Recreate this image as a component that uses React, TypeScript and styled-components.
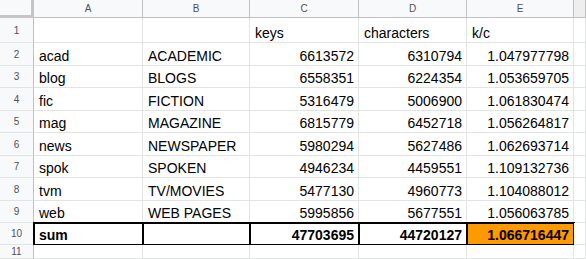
import React from 'react'
import styled, { createGlobalStyle } from 'styled-components'

const GlobalStyle = createGlobalStyle`
  html, body {
    margin: 0;
    padding: 0;
    background: #ffffff;
    overflow: hidden;
  }
`

const COLUMNS = ['A', 'B', 'C', 'D', 'E', '']
const ROW_HEIGHTS = [25, 23, 22, 23, 22, 23, 22, 23, 22, 22]

const Sheet = styled.div`
  display: grid;
  grid-template-columns: 34px 109px 107px 109px 108px 107px 1fr;
  grid-template-rows: 18px ${ROW_HEIGHTS.map((h) => `${h}px`).join(' ')} 1fr;
  width: 586px;
  height: 259px;
  font-family: 'Liberation Sans', Arial, sans-serif;
  color: #000;
`

const CornerCell = styled.div`
  box-sizing: border-box;
  background: #f8f9fa;
  border-right: 3px solid #c4c7c5;
  border-bottom: 3px solid #c4c7c5;
`

const ColHeader = styled.div<{ $spare?: boolean }>`
  box-sizing: border-box;
  display: flex;
  align-items: center;
  justify-content: center;
  background: ${({ $spare }) => ($spare ? '#eeeeee' : '#f8f9fa')};
  border-right: 1px solid #c0c0c0;
  border-bottom: 1px solid #c0c0c0;
  font-size: 10px;
  color: #4d5156;
`

const RowHeader = styled.div`
  box-sizing: border-box;
  display: flex;
  align-items: center;
  justify-content: center;
  background: #f8f9fa;
  border-right: 1px solid #c0c0c0;
  border-bottom: 1px solid #e2e3e3;
  font-size: 10px;
  color: #4d5156;
`

const Cell = styled.div<{ $align?: 'left' | 'right'; $sum?: boolean; $fill?: string }>`
  box-sizing: border-box;
  display: flex;
  align-items: flex-end;
  justify-content: ${({ $align }) => ($align === 'right' ? 'flex-end' : 'flex-start')};
  padding: 0 4px 1px 5px;
  background: ${({ $fill }) => $fill || '#ffffff'};
  border-right: 1px solid #e2e3e3;
  border-bottom: 1px solid #e2e3e3;
  font-size: 14px;
  line-height: 16px;
  font-weight: ${({ $sum }) => ($sum ? 700 : 400)};
  white-space: nowrap;
  overflow: hidden;
  ${({ $sum }) => ($sum ? 'outline: 2px solid #000; outline-offset: -1px;' : '')}
`

type Row = [string, string, string, string, string]

const rows: Row[] = [
  ['', '', 'keys', 'characters', 'k/c'],
  ['acad', 'ACADEMIC', '6613572', '6310794', '1.047977798'],
  ['blog', 'BLOGS', '6558351', '6224354', '1.053659705'],
  ['fic', 'FICTION', '5316479', '5006900', '1.061830474'],
  ['mag', 'MAGAZINE', '6815779', '6452718', '1.056264817'],
  ['news', 'NEWSPAPER', '5980294', '5627486', '1.062693714'],
  ['spok', 'SPOKEN', '4946234', '4459551', '1.109132736'],
  ['tvm', 'TV/MOVIES', '5477130', '4960773', '1.104088012'],
  ['web', 'WEB PAGES', '5995856', '5677551', '1.056063785'],
  ['sum', '', '47703695', '44720127', '1.066716447'],
]

const isNumber = (v: string) => /^[0-9.]+$/.test(v)

export default function App() {
  return (
    <>
      <GlobalStyle />
      <Sheet>
        <CornerCell />
        {COLUMNS.map((c, i) => (
          <ColHeader key={c || 'spare'} $spare={i === COLUMNS.length - 1}>
            {c}
          </ColHeader>
        ))}

        {rows.map((row, r) => {
          const sum = r === rows.length - 1
          return (
            <React.Fragment key={r}>
              <RowHeader>{r + 1}</RowHeader>
              {row.map((v, c) => (
                <Cell
                  key={c}
                  $align={isNumber(v) ? 'right' : 'left'}
                  $sum={sum}
                  $fill={sum && c === 4 ? '#ff9900' : undefined}
                >
                  {v}
                </Cell>
              ))}
              <Cell />
            </React.Fragment>
          )
        })}

        <RowHeader>11</RowHeader>
        {COLUMNS.map((c) => (
          <Cell key={c || 'spare'} />
        ))}
      </Sheet>
    </>
  )
}
